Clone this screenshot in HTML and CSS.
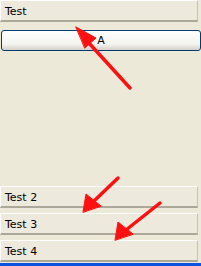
FILE: index.html
```html
<!DOCTYPE html>
<html lang="en">
  <head>
    <meta charset="UTF-8" />
    <title>Test</title>
    <link rel="stylesheet" href="styles.css">
  </head>
  <body>
    <div class="panel">
      <div class="bar">Test</div>
      <button class="btn-a">A</button>
      <div class="spacer"></div>
      <div class="bar">Test 2</div>
      <div class="bar">Test 3</div>
      <div class="bar">Test 4</div>
      <div class="taskbar"></div>
    </div>

    <svg class="arrows" width="201" height="266" viewBox="0 0 201 266">
      <g stroke="#ff1010" stroke-width="3.5" fill="#ff1010" stroke-linecap="round">
        <line x1="130" y1="88" x2="88" y2="42" />
        <polygon points="76,27 96,38 85,48" stroke-width="1" />
        <line x1="118" y1="178" x2="94" y2="201" />
        <polygon points="83,212 86,194 101,206" stroke-width="1" />
        <line x1="160" y1="203" x2="126" y2="230" />
        <polygon points="115,240 118,222 133,234" stroke-width="1" />
      </g>
    </svg>
  </body>
</html>
```

FILE: styles.css
```css
body {
  margin: 0;
  background-color: #ece9d8;
  font-family: Tahoma, "DejaVu Sans", sans-serif;
  font-size: 11px;
}
.panel {
  display: flex;
  flex-direction: column;
  height: 266px;
  width: 201px;
}
.bar {
  box-sizing: border-box;
  width: 198px;
  height: 22px;
  padding: 4px 0 0 4px;
  background-color: #ede9dc;
  border-top: 1px solid #ffffff;
  border-left: 1px solid #ffffff;
  border-bottom: 2px solid #aca899;
  border-right: 1px solid #c5c2b2;
  color: #000;
}
.btn-a {
  box-sizing: border-box;
  width: 200px;
  height: 21px;
  margin: 8px 0 0 1px;
  padding: 0;
  border: 1px solid #003c74;
  border-radius: 3px;
  background: linear-gradient(#ffffff, #f3f3ef 70%, #d6d0c5);
  font-family: Tahoma, "DejaVu Sans", sans-serif;
  font-size: 11px;
  color: #000;
}
.spacer {
  flex: 1;
}
.bar + .bar {
  margin-top: 5px;
}
.taskbar {
  height: 3px;
  margin-top: 1px;
  background-color: #0a53e0;
}
.arrows {
  position: absolute;
  left: 0;
  top: 0;
}
```
